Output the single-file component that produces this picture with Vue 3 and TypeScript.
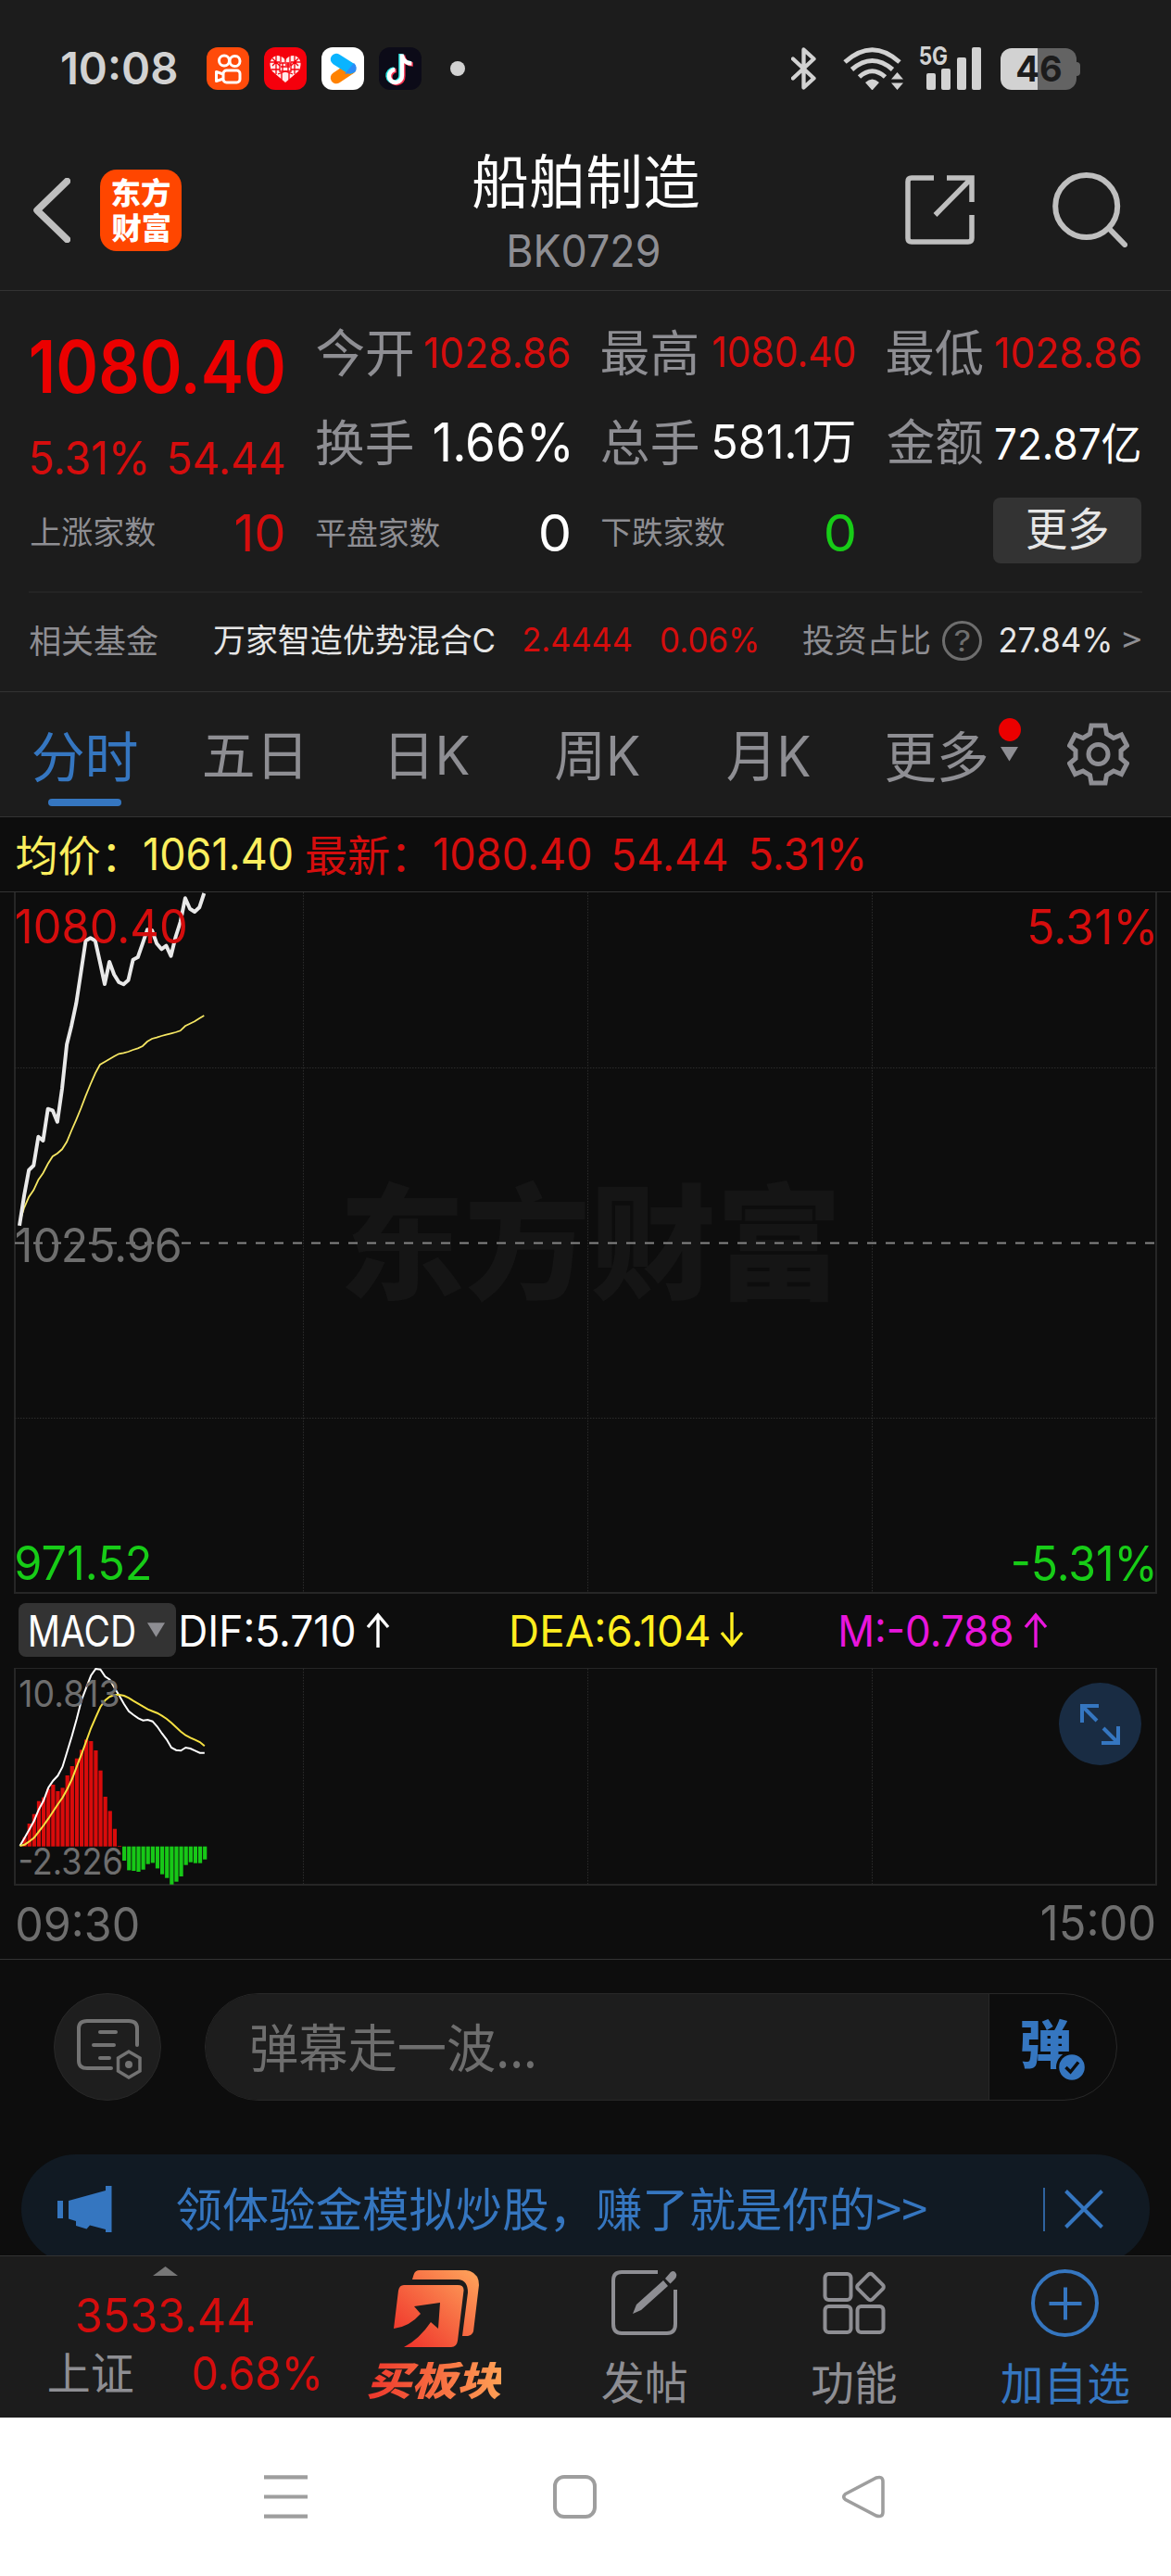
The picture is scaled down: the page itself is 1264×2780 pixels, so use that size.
<script setup lang="ts">
import { computed, defineComponent, h } from 'vue'

const FAMILY = 'Inter, "Noto Sans CJK SC", sans-serif'
const REF = 200
const ctx = document.createElement('canvas').getContext('2d')!

/* Text sized by the box its glyphs fill: w and h are the drawn width and height. */
const FitText = defineComponent({
  props: {
    t: { type: String, required: true },
    w: { type: Number, required: true },
    h: { type: Number, required: true },
    weight: { type: Number, default: 400 },
    italic: Boolean,
    family: { type: String, default: FAMILY },
    gradient: { type: String, default: '' },
  },
  setup(props) {
    const box = computed(() => {
      const fontStyle = props.italic ? 'italic' : 'normal'
      ctx.font = `${fontStyle} ${props.weight} ${REF}px ${props.family}`
      const m = ctx.measureText(props.t)
      const inkH = m.actualBoundingBoxAscent + m.actualBoundingBoxDescent
      const inkW = m.actualBoundingBoxLeft + m.actualBoundingBoxRight
      const k = props.h / inkH
      const size = REF * k
      const sx = props.w / (inkW * k)
      const base = size / 2 + ((m.fontBoundingBoxAscent - m.fontBoundingBoxDescent) * k) / 2
      const dx = m.actualBoundingBoxLeft * k * sx
      const dy = m.actualBoundingBoxAscent * k - base
      return {
        display: 'inline-block',
        whiteSpace: 'pre',
        fontFamily: props.family,
        fontSize: `${size}px`,
        fontWeight: String(props.weight),
        fontStyle,
        lineHeight: `${size}px`,
        transformOrigin: '0 0',
        transform: `translate(${dx}px, ${dy}px) scaleX(${sx})`,
        ...(props.gradient
          ? { backgroundImage: props.gradient, backgroundClip: 'text', color: 'transparent' }
          : {}),
      }
    })
    return () =>
      h('span', { style: { display: 'block', flex: 'none', width: `${props.w}px`, height: `${props.h}px`, lineHeight: '0' } }, [
        h('span', { style: box.value }, props.t),
      ])
  },
})

const STEP = 5.11
const START = 21
const price = [360.7, 328, 300.7, 295.7, 264.7, 269, 234.7, 236.3, 248.7, 213, 165.3, 144.7, 120.7, 87.3, 53.3, 50.3, 53.3, 76.3, 100, 76, 89.7, 98, 100.3, 95.7, 73.7, 71, 56.3, 41.3, 42, 56.3, 62.3, 58.7, 69.7, 49, 33, 7.3, 18.7, 22, 17.3, 2]
const average = [358, 341.3, 329.7, 322.3, 311.3, 304, 294, 286, 282.7, 278.3, 270.3, 258, 246.3, 234, 220.7, 208, 196.3, 187, 184, 181, 178, 175.3, 174.3, 173, 171, 169.3, 167, 162, 159, 157.7, 156, 154.7, 153.3, 152, 150.3, 145.3, 142.7, 140.3, 137, 134]
const dif = [192, 183.3, 174.3, 165, 152.7, 143.3, 129.3, 121.7, 116.3, 106.7, 90, 73.3, 55, 35, 21.7, 8.3, 1, 1.7, 9.3, 12.7, 21.7, 30, 39, 46.7, 50.7, 54.3, 56.7, 56, 57.7, 63.3, 70.7, 77.3, 86, 88.7, 89.3, 86, 87, 89.3, 91.7, 91.7]
const dea = [192, 190.7, 187.3, 183.3, 176.7, 170, 162.7, 155, 147.3, 140, 130.7, 120, 106.7, 93.3, 79.3, 65, 53.3, 42, 35, 31, 29, 29, 30, 32.3, 35.7, 38.7, 41.7, 44.7, 46.7, 48.7, 51.7, 55, 59.3, 64, 68.7, 72.7, 75.3, 77.7, 80, 84.3]
const bars = [0, 10, 24.7, 35, 49, 53, 62, 66.7, 59.7, 63.3, 76.7, 86.7, 95, 104.3, 115.3, 113.7, 103.7, 82, 53.7, 38.3, 19, 0.7, -15.3, -25.7, -26.3, -27.3, -25, -19, -17.7, -23.7, -30, -34, -41, -38, -32.3, -20, -17, -18, -18, -14]

const line = (ys: number[], start = START) => ys.map((y, i) => `${(start + i * STEP).toFixed(1)},${y}`).join(' ')
const gridX = [327.5, 634.5, 941.5]
</script>

<template>
  <div class="phone">
    <div class="status">
      <FitText t="10:08" :w="123" :h="35.5" :weight="600" />
      <div class="apps">
        <svg width="46" height="46" viewBox="0 0 46 46">
          <rect width="46" height="46" rx="12" fill="#ff4b0a" />
          <g fill="none" stroke="#fff" stroke-width="3">
            <circle cx="19" cy="14.5" r="5.5" /><circle cx="30.5" cy="15" r="5.5" />
            <rect x="18" y="25" width="18" height="13" rx="3.5" />
            <path d="M18 29 L10.5 26.5 V36.500 L18 34" stroke-linejoin="round" />
          </g>
        </svg>
        <svg width="46" height="46" viewBox="0 0 46 46">
          <rect width="46" height="46" rx="12" fill="#f5000c" />
          <path d="M23 38 L9 26 Q6 22 6.500 16 Q9 9 15 9 Q21 10 23 14 Q26 9 32 9 Q38 10 39.500 16 Q40 22 37 26 Z" fill="#ffe9e9" />
          <g fill="none" stroke="#f5000c" stroke-width="1.300">
            <path d="M13 9 V29 M18 9 V16 M28 9 V16 M33 9 V29 M6 16 H17 M29 16 H40 M8 24 H17 M29 24 H38 M15 29 L23 26 L31 29 M23 10 V16 M19 27 V35 M27 27 V35 M9 12 L17 20 M37 12 L29 20 M9 20 L13 16 M37 20 L33 16" />
            <path d="M17 17 H29 V26 H17 Z M20 17 V26 M26 17 V26 M23 19 H29 M18 21 H28" />
          </g>
        </svg>
        <svg width="46" height="46" viewBox="0 0 46 46">
          <rect width="46" height="46" rx="12" fill="#fff" />
          <path d="M16 33 L31 23" stroke="#ff8200" stroke-width="12.500" stroke-linecap="round" />
          <path d="M16 13 L31 22.500" stroke="#0ab4ff" stroke-width="12.500" stroke-linecap="round" />
          <path d="M25 29 L36 27 A7 7 0 0 0 35 17 Z" fill="#2b8cf7" />
        </svg>
        <svg width="46" height="46" viewBox="0 0 46 46">
          <rect width="46" height="46" rx="12" fill="#0c0b18" />
          <g fill="none" stroke-width="4.500">
            <path d="M24.500 7 V30 A7 7 0 1 1 17 23.500 M24.500 9 Q27 17 35 17" stroke="#25e8e4" transform="translate(-1 0)" />
            <path d="M24.500 7 V30 A7 7 0 1 1 17 23.500 M24.500 9 Q27 17 35 17" stroke="#fa3350" transform="translate(1.800 1.500)" />
            <path d="M24.500 7 V30 A7 7 0 1 1 17 23.500 M24.500 9 Q27 17 35 17" stroke="#fff" transform="translate(.4 .5)" />
          </g>
        </svg>
      </div>
      <i class="more-dot"></i>
      <div class="signals">
        <svg width="27" height="46" viewBox="0 0 27 46">
          <path d="M2 12.500 L24.500 33.500 L13.500 43.500 V2.500 L24.500 12.500 L2 33.500" fill="none" stroke="#d2d2d2" stroke-width="4.300" stroke-linejoin="round" stroke-linecap="round" />
        </svg>
        <svg class="wifi" width="65" height="46" viewBox="0 0 65 46">
          <g fill="none" stroke="#d2d2d2" stroke-width="5">
            <path d="M2 16 Q31.500 -10.500 61 16" /><path d="M9.500 24 Q31.500 5 53.500 24" /><path d="M17.500 32 Q31.500 19.500 45.500 32" />
          </g>
          <path d="M24 38 Q31.500 31 39 38 L31.500 46.500 Z M52 34.500 L58.500 27 L65 34.500 Z M52 38.500 H65 L58.500 46 Z" fill="#d2d2d2" />
        </svg>
        <div class="cell">
          <FitText class="gen" t="5G" :w="29" :h="20" :weight="700" />
          <i class="b1"></i><i class="b2"></i><i class="b3"></i><i class="b4"></i>
        </div>
        <div class="battery"><FitText t="46" :w="47" :h="29" :weight="700" /></div>
      </div>
    </div>

    <header class="head">
      <div class="head-left">
        <svg width="41" height="70" viewBox="0 0 41 70"><path d="M37.500 3.500 L5 35 L37.500 66.500" fill="none" stroke="#bfbfbf" stroke-width="7.500" stroke-linecap="round" stroke-linejoin="round" /></svg>
        <div class="logo">
          <FitText t="东方" :w="62" :h="31" :weight="900" />
          <FitText t="财富" :w="62" :h="31" :weight="900" />
        </div>
      </div>
      <div class="title">
        <FitText t="船舶制造" :w="243" :h="59" />
        <FitText class="code" t="BK0729" :w="161" :h="35.5" />
      </div>
      <div class="head-right">
        <svg width="75" height="75" viewBox="0 0 75 75"><path d="M31 3 H7 Q3 3 3 7 V68 Q3 72 7 72 H68 Q72 72 72 68 V43 M45 3 H72 V29 M72 3 L32.500 43" fill="none" stroke="#bfbfbf" stroke-width="5.500" /></svg>
        <svg width="81" height="81" viewBox="0 0 81 81"><circle cx="36.700" cy="36.500" r="33.500" fill="none" stroke="#bfbfbf" stroke-width="6" /><path d="M61 60.500 L78 78" stroke="#bfbfbf" stroke-width="6" stroke-linecap="round" /></svg>
      </div>
    </header>

    <section class="quote">
      <div class="col first">
        <div class="cell-row price"><FitText t="1080.40" :w="271.5" :h="58" :weight="600" /></div>
        <div class="cell-row change red"><FitText t="5.31%" :w="123" :h="37" /><FitText t="54.44" :w="123" :h="35" /></div>
        <div class="cell-row"><FitText t="上涨家数" :w="133.5" :h="32.5" /><FitText class="red" t="10" :w="50.5" :h="41" /></div>
      </div>
      <div class="col">
        <div class="cell-row"><FitText t="今开" :w="103" :h="51.5" /><FitText class="red" t="1028.86" :w="155" :h="34" /></div>
        <div class="cell-row"><FitText t="换手" :w="103" :h="50" /><FitText class="white" t="1.66%" :w="145" :h="43.5" /></div>
        <div class="cell-row"><FitText t="平盘家数" :w="132.5" :h="32.5" /><FitText class="white" t="0" :w="30" :h="41" /></div>
      </div>
      <div class="col">
        <div class="cell-row"><FitText t="最高" :w="102" :h="50" /><FitText class="red" t="1080.40" :w="152" :h="33.5" /></div>
        <div class="cell-row"><FitText t="总手" :w="103" :h="49" /><FitText class="white" t="581.1万" :w="150.5" :h="43" /></div>
        <div class="cell-row"><FitText t="下跌家数" :w="132" :h="32.5" /><FitText class="green" t="0" :w="30" :h="41" /></div>
      </div>
      <div class="col">
        <div class="cell-row"><FitText t="最低" :w="102.5" :h="50" /><FitText class="red" t="1028.86" :w="155.5" :h="34" /></div>
        <div class="cell-row"><FitText t="金额" :w="102.5" :h="50" /><FitText class="white" t="72.87亿" :w="155" :h="43.5" /></div>
        <div class="cell-row"><div class="more-btn"><FitText t="更多" :w="86" :h="45.5" /></div></div>
      </div>
    </section>

    <section class="fund">
      <FitText t="相关基金" :w="138" :h="33" />
      <FitText class="fund-name" t="万家智造优势混合C" :w="302.5" :h="33" />
      <FitText class="fund-nav red" t="2.4444" :w="115" :h="26.5" />
      <FitText class="fund-pct red" t="0.06%" :w="102.500" :h="27.5" />
      <FitText class="fund-share" t="投资占比" :w="136" :h="32.5" />
      <div class="help"><FitText t="?" :w="15.5" :h="23" /></div>
      <FitText class="fund-val" t="27.84%" :w="117.5" :h="27.5" />
      <FitText class="fund-go" t=">" :w="18" :h="17" />
    </section>

    <nav class="tabs">
      <div class="tab on"><FitText t="分时" :w="111.5" :h="55" /></div>
      <FitText class="t2" t="五日" :w="103" :h="48.5" />
      <FitText class="t3" t="日K" :w="83" :h="48.5" />
      <FitText class="t4" t="周K" :w="90" :h="52" />
      <FitText class="t5" t="月K" :w="89" :h="52.5" />
      <div class="tab t6"><FitText t="更多" :w="107.5" :h="55" /><i class="caret"></i><i class="badge"></i></div>
      <svg class="gear" width="67" height="68" viewBox="0 0 67 68">
        <path d="M26 3 H41 L42.500 12 L50 16.500 L58.500 13 L64.500 24.500 L58 30 V38.500 L64.500 44 L58.500 55.500 L50 52 L42.500 56.500 L41 65 H26 L24.500 56.500 L17 52 L8.500 55.500 L2.500 44 L9 38.500 V30 L2.500 24.500 L8.500 13 L17 16.500 L24.500 12 Z" fill="none" stroke="#8e8e93" stroke-width="5" />
        <circle cx="33.500" cy="34" r="10.500" fill="none" stroke="#8e8e93" stroke-width="5" />
      </svg>
    </nav>

    <div class="summary red">
      <FitText class="yellow" t="均价：" :w="106" :h="43" />
      <FitText class="s2 yellow" t="1061.40" :w="158.5" :h="35.5" />
      <FitText class="s3" t="最新：" :w="105.5" :h="43" />
      <FitText class="s4" t="1080.40" :w="168" :h="35.5" />
      <FitText class="s5" t="54.44" :w="121" :h="35" />
      <FitText class="s6" t="5.31%" :w="120" :h="36.5" />
    </div>

    <div class="chart">
      <FitText class="mark" t="东方财富" :w="528" :h="132" :weight="900" />
      <svg width="1264" height="758" viewBox="0 0 1264 758">
        <g fill="none" stroke="#262626">
          <path d="M0 .5 H1264" stroke="#333" /><path d="M16 1 V757 H1248 V1" stroke-width="2" />
          <path v-for="x in gridX" :key="x" :d="`M${x} 1 V757`" stroke-dasharray="1.500 1.500" stroke="#2c2c2c" />
          <path d="M16 190.500 H1248 M16 568.500 H1248" stroke-dasharray="1.500 1.500" stroke="#2c2c2c" />
        </g>
        <path d="M16 379.500 H1248" stroke="#868686" stroke-width="2" stroke-dasharray="10 10" />
        <polyline :points="line(average)" fill="none" stroke="#f5e663" stroke-width="1.800" />
        <polyline :points="line(price)" fill="none" stroke="#e9e9e9" stroke-width="4" stroke-linejoin="round" />
      </svg>
      <FitText class="c-high red" t="1080.40" :w="182" :h="38" />
      <FitText class="c-mid" t="1025.96" :w="176" :h="38" />
      <FitText class="c-low green" t="971.52" :w="143" :h="38" />
      <FitText class="c-up red" t="5.31%" :w="133" :h="39" />
      <FitText class="c-down green" t="-5.31%" :w="150.5" :h="39" />
    </div>

    <div class="macd-head">
      <div class="macd-btn"><FitText t="MACD" :w="112" :h="35" /><i class="caret"></i></div>
      <FitText class="m1" t="DIF:5.710" :w="186" :h="35" />
      <svg class="arrow" width="26" height="38" viewBox="0 0 26 38"><path d="M13 38 V3 M2 16 L13 3 L24 16" fill="none" stroke="#fff" stroke-width="3.400" /></svg>
      <FitText class="m2 bright" t="DEA:6.104" :w="212" :h="35" />
      <svg class="arrow" width="26" height="38" viewBox="0 0 26 38"><path d="M13 0 V35 M2 22 L13 35 L24 22" fill="none" stroke="#ffee1f" stroke-width="3.400" /></svg>
      <FitText class="m3 magenta" t="M:-0.788" :w="184" :h="35" />
      <svg class="arrow" width="26" height="38" viewBox="0 0 26 38"><path d="M13 38 V3 M2 16 L13 3 L24 16" fill="none" stroke="#e815dc" stroke-width="3.400" /></svg>
    </div>

    <div class="macd">
      <svg width="1264" height="236" viewBox="0 0 1264 236">
        <g fill="none" stroke="#262626">
          <path d="M16 .5 H1248" /><path d="M16 0 V234 H1248 V0" stroke-width="2" />
          <path v-for="x in gridX" :key="x" :d="`M${x} 1 V233`" stroke-dasharray="1.500 1.500" stroke="#2c2c2c" />
        </g>
        <rect
          v-for="(v, i) in bars" :key="i"
          :x="21.6 + i * 5.12 - 2.2" :y="v > 0 ? 192.7 - v : 192.7" width="4.200" :height="Math.abs(v)"
          :fill="v > 0 ? '#d90b0b' : '#17c817'"
        />
        <polyline :points="line(dif, 21.5)" fill="none" stroke="#fff" stroke-width="2" />
        <polyline :points="line(dea, 21.5)" fill="none" stroke="#f5e042" stroke-width="2" />
      </svg>
      <FitText class="a-high" t="10.813" :w="105.5" :h="29" />
      <FitText class="a-low" t="-2.326" :w="109" :h="29" />
      <svg class="expand" width="89" height="89" viewBox="0 0 89 89">
        <circle cx="44.500" cy="44.500" r="44.500" fill="#192c43" />
        <path d="M25 43 V25 H43 M25 25 L41 41 M64 47 V65 H46 M64 65 L48 49" fill="none" stroke="#3576c0" stroke-width="4" />
      </svg>
    </div>

    <div class="times"><FitText t="09:30" :w="129.5" :h="38.5" /><FitText t="15:00" :w="120.5" :h="38.5" /></div>

    <div class="danmu">
      <div class="danmu-set">
        <svg width="70" height="65" viewBox="0 0 70 65">
          <g fill="none" stroke="#737373" stroke-width="4" stroke-linecap="round">
            <path d="M37 53 H11 Q2 53 2 45 V10 Q2 2 11 2 H56 Q65 2 65 10 V28" /><path d="M25 14 H42 M18 28 H40 M25 42 H35" />
            <path d="M56 35 L68 42 V56 L56 63 L44.500 56 V42 Z" stroke-width="3.500" />
          </g>
          <circle cx="56" cy="49" r="4" fill="#737373" />
        </svg>
      </div>
      <div class="danmu-box">
        <div class="danmu-input"><FitText t="弹幕走一波..." :w="304" :h="51.5" family="'Noto Sans CJK SC', sans-serif" /></div>
        <div class="danmu-toggle">
          <FitText t="弹" :w="52.5" :h="53" :weight="900" />
          <svg class="check" width="34" height="34" viewBox="0 0 34 34"><circle cx="17" cy="17" r="17" fill="#0d0d0d" /><circle cx="17" cy="17" r="13.800" fill="#3576c0" /><path d="M10.500 17 L15.500 22 L24 11.500" fill="none" stroke="#0d0d0d" stroke-width="3.500" /></svg>
        </div>
      </div>
    </div>

    <div class="promo-wrap">
      <div class="promo">
        <svg width="59" height="50" viewBox="0 0 59 50"><path d="M0 16 H6 V35 H0 Z M12 16 L52 5 V0 H58.500 V50 H52 V47 L35 42.500 L31.500 46.500 L20 43 V38 L12 35.500 Z" fill="#3576c0" /></svg>
        <FitText class="promo-text" t="领体验金模拟炒股，赚了就是你的>>" :w="808.5" :h="48.5" family="'Noto Sans CJK SC', sans-serif" />
        <i class="promo-sep"></i>
        <svg class="promo-x" width="42" height="42" viewBox="0 0 42 42"><path d="M1.500 1.500 L40.500 40.500 M40.500 1.500 L1.500 40.500" stroke="#3576c0" stroke-width="4" /></svg>
      </div>
    </div>

    <footer class="bar">
      <div class="index red">
        <i class="up"></i>
        <FitText t="3533.44" :w="189" :h="38" />
        <div class="index-row"><FitText class="grey" t="上证" :w="90" :h="42.5" /><FitText t="0.68%" :w="134.5" :h="37.5" /></div>
      </div>
      <div class="item buy">
        <svg width="92" height="83" viewBox="0 0 92 83">
          <defs><linearGradient id="hot" x1="0" y1="1" x2="1" y2="0"><stop offset="0" stop-color="#ee2b27" /><stop offset="1" stop-color="#ffa65c" /></linearGradient></defs>
          <path d="M11 16 H69 Q76 16 75.500 22 L69 76 Q68 83 62 83 H11 Q28 74 40 56 L48 63 L50 35 L22 39 L29 47 Q17 61 0 63 L5 22 Q6 16 11 16 Z M20 10 L21.500 5 Q23 0 28 0 H78 Q92 2 92 16 L86 66 Q85 70 80 71 H74 L80 24 Q80 11 70 10 Z" fill="url(#hot)" />
        </svg>
        <FitText t="买板块" :w="148" :h="41" :weight="900" italic gradient="linear-gradient(90deg, #ee352b, #ffa055)" />
      </div>
      <div class="item post">
        <svg width="71" height="71" viewBox="0 0 71 71">
          <path d="M50 2 H11 Q2 2 2 11 V58 Q2 68 11 68 H60 Q69 68 69 58 V21" fill="none" stroke="#8e8e93" stroke-width="4" />
          <path d="M23 47 L27 37 L56 11 L61 17 L32 43 Z M58 9 L64 2 Q68 -1 70 4 Q71 7 68 10 L63.500 14.500 Z" fill="#8e8e93" />
        </svg>
        <FitText t="发帖" :w="91" :h="45" />
      </div>
      <div class="item tools">
        <svg width="69" height="69" viewBox="0 0 69 69">
          <g fill="none" stroke="#8e8e93" stroke-width="4">
            <rect x="2.500" y="4" width="28" height="28" rx="4" /><rect x="2.500" y="39" width="28" height="28" rx="4" /><rect x="37.500" y="39" width="28" height="28" rx="4" />
            <rect x="40.500" y="7" width="22" height="22" rx="3" transform="rotate(45 51.500 18)" />
          </g>
        </svg>
        <FitText t="功能" :w="90" :h="45" />
      </div>
      <div class="item add">
        <svg width="73" height="73" viewBox="0 0 73 73"><circle cx="36.500" cy="36.500" r="34.500" fill="none" stroke="#3576c0" stroke-width="4" /><path d="M19.500 37 H54.500 M37 19.500 V54.500" stroke="#3576c0" stroke-width="4" /></svg>
        <FitText t="加自选" :w="137.5" :h="44" />
      </div>
    </footer>

    <div class="sysnav">
      <svg width="47" height="47" viewBox="0 0 47 47"><path d="M0 2.300 H47 M0 23.500 H47 M0 44.700 H47" stroke="#9e9e9e" stroke-width="4.200" /></svg>
      <svg width="47" height="47" viewBox="0 0 47 47"><rect x="2" y="2" width="43" height="43" rx="10" fill="none" stroke="#9e9e9e" stroke-width="4" /></svg>
      <svg width="46" height="47" viewBox="0 0 46 47"><path d="M3.500 20.500 L37 3 Q44 1 44 7 V40 Q44 46 37 44 L3.500 26.500 Q0 23.500 3.500 20.500 Z" fill="none" stroke="#9e9e9e" stroke-width="3.600" /></svg>
    </div>
  </div>
</template>

<style>
body { background: #0d0d0d; }
</style>

<style scoped>
.phone { width: 1264px; height: 2780px; overflow: hidden; display: flex; flex-direction: column; background: #0d0d0d; color: #8e8e93; font-family: Inter, "Noto Sans CJK SC", sans-serif; }
.phone > * { flex: none; box-sizing: border-box; }
svg { display: block; flex: none; }
i { display: block; flex: none; }
.red { color: #d50d0d; }
.white { color: #fff; }
.green { color: #17cc17; }
.yellow { color: #fbee5e; }
.bright { color: #ffee1f; }
.magenta { color: #e815dc; }
.grey { color: #8e8e93; }

.status { height: 148px; background: #1c1c1c; color: #d2d2d2; display: flex; align-items: center; padding: 0 98px 0 66.5px; }
.apps { display: flex; gap: 16px; margin-left: 33.5px; }
.more-dot { width: 16px; height: 16px; border-radius: 50%; background: #d2d2d2; margin-left: 31px; }
.signals { margin-left: auto; display: flex; align-items: center; }
.wifi { margin-left: 29px; }
.cell { position: relative; width: 66px; height: 46px; margin-left: 18px; display: flex; align-items: flex-end; gap: 6.4px; padding-left: 7px; box-sizing: border-box; }
.cell i { width: 10px; border-radius: 2px; background: #d2d2d2; }
.gen { position: absolute; left: 0; top: -1px; }
.b1 { height: 18px; } .b2 { height: 23px; } .b3 { height: 35px; } .b4 { height: 46px; }
.battery { position: relative; width: 82px; height: 45px; margin: 1px 4px 0 21px; border-radius: 12px; background: linear-gradient(90deg, #d2d2d2 40px, #636363 40px); color: #1c1c1c; display: flex; align-items: center; justify-content: center; }
.battery::after { content: ""; position: absolute; right: -4px; top: 15px; width: 4px; height: 15px; border-radius: 0 4px 4px 0; background: #636363; }

.head { height: 166px; background: #1c1c1c; border-bottom: 1px solid #333; display: grid; grid-template-columns: 1fr auto 1fr; padding: 0 47px 0 35px; }
.head-left { display: flex; align-items: center; gap: 31.5px; height: 158px; }
.logo { width: 88px; height: 88px; border-radius: 18px; background: #ff4600; color: #fff; display: flex; flex-direction: column; align-items: center; justify-content: center; gap: 7px; }
.title { display: flex; flex-direction: column; align-items: center; gap: 28px; padding-top: 18px; color: #fff; margin-left: 12px; }
.code { color: #8e8e93; margin-right: 3px; }
.head-right { display: flex; align-items: center; justify-content: flex-end; gap: 84px; height: 157px; }

.quote { height: 324px; background: #1c1c1c; display: grid; grid-template-columns: repeat(4, 272px); column-gap: 36.2px; padding: 18.5px 33.5px 0; }
.cell-row { height: 97px; display: flex; align-items: center; justify-content: space-between; }
.cell-row.price { height: 129px; color: #eb0000; }
.cell-row.change { height: 65px; }
.more-btn { width: 160px; height: 71px; border-radius: 8px; background: #333; color: #e6e6e6; display: flex; align-items: center; justify-content: center; margin: -6px -2px 0 auto; }

.fund { height: 109px; background: linear-gradient(#242424, #242424) 31px 0 / 1202px 2px no-repeat #1c1c1c; border-bottom: 1px solid #333; display: flex; align-items: center; padding: 0 0 1px 32px; }
.fund-name { margin-left: 60.5px; color: #e6e6e6; }
.fund-nav { margin-left: 33px; }
.fund-pct { margin-left: 33px; }
.fund-share { margin-left: 50px; }
.help { width: 43px; height: 43px; box-sizing: border-box; border: 3px solid #6e6e6e; border-radius: 50%; color: #6e6e6e; margin-left: 14.5px; display: flex; align-items: center; justify-content: center; }
.fund-val { margin-left: 20px; color: #e6e6e6; }
.fund-go { margin-left: 15.5px; }

.tabs { height: 135px; background: #1c1c1c; border-bottom: 1px solid #333; display: flex; align-items: center; padding: 5px 0 0 36px; }
.tab { position: relative; }
.on { color: #3576c0; }
.on::after { content: ""; position: absolute; left: 16px; top: 73px; width: 79px; height: 8px; border-radius: 4px; background: #3576c0; }
.t2 { margin-left: 73.5px; } .t3 { margin-left: 99px; } .t4 { margin-left: 94px; } .t5 { margin-left: 95px; } .t6 { margin-left: 83px; }
.caret { width: 19px; height: 15.5px; background: #8e8e93; clip-path: polygon(0 0, 100% 0, 50% 100%); }
.t6 .caret { position: absolute; left: 123px; top: 17px; }
.badge { position: absolute; left: 121px; top: -14px; width: 24px; height: 25px; border-radius: 50%; background: #eb0000; }
.gear { margin: -5px 0 0 87px; }

.summary { height: 80px; display: flex; align-items: center; padding-left: 18px; }
.s2 { margin-left: 32px; } .s3 { margin-left: 16.5px; } .s4 { margin-left: 32.5px; } .s5 { margin-left: 26px; } .s6 { margin-left: 26.5px; }

.chart { position: relative; height: 758px; }
.chart > svg { position: relative; }
.mark { position: absolute; left: 372px; top: 313px; color: #151515; }
.c-high { position: absolute; left: 18px; top: 19px; }
.c-mid { position: absolute; left: 18px; top: 363px; color: #6e6e6e; }
.c-low { position: absolute; left: 18px; top: 706px; }
.c-up { position: absolute; right: 19.5px; top: 19px; }
.c-down { position: absolute; right: 19.5px; top: 706px; }

.macd-head { height: 80px; display: flex; align-items: center; padding: 0 0 2px 20px; color: #fff; }
.macd-btn { width: 170px; height: 58px; border-radius: 8px; background: #333; display: flex; align-items: center; gap: 14px; padding-left: 13px; box-sizing: border-box; }
.m1 { margin-left: 6px; } .m2 { margin-left: 132px; } .m3 { margin-left: 105px; }
.arrow { margin-left: 12.5px; }

.macd { position: relative; height: 236px; color: #6e6e6e; }
.a-high { position: absolute; left: 21.5px; top: 14px; }
.a-low { position: absolute; left: 22px; top: 195px; }
.expand { position: absolute; left: 1143px; top: 16px; }

.times { height: 79px; border-bottom: 1px solid #333; display: flex; justify-content: space-between; align-items: center; padding: 2px 18.5px 0; color: #6e6e6e; }

.danmu { height: 210px; display: flex; align-items: flex-start; gap: 47px; padding: 36px 58px 0; }
.danmu-set { width: 116px; height: 116px; box-sizing: border-box; border-radius: 50%; background: #1e1e1e; border: 1.500px solid #282828; display: flex; align-items: center; justify-content: center; padding: 5px 0 0 4px; }
.danmu-box { width: 985px; height: 116px; box-sizing: border-box; border: 1.500px solid #282828; border-radius: 58px; overflow: hidden; display: flex; }
.danmu-input { flex: none; box-sizing: border-box; width: 846px; background: #1d1d1d; border-right: 1px solid #282828; display: flex; align-items: center; padding: 4px 0 0 50px; color: #6e6e6e; }
.danmu-toggle { position: relative; flex: 1; padding: 28px 0 0 35px; color: #3576c0; }
.check { position: absolute; left: 72px; top: 62px; }

.promo-wrap { height: 109px; overflow: hidden; padding: 0 23px; }
.promo { height: 118px; border-radius: 59px; background: #111a23; color: #3576c0; display: flex; align-items: center; padding-left: 39px; }
.promo-text { margin-left: 69.5px; }
.promo-sep { width: 2px; height: 47px; margin-left: 127px; background: #2f639f; }
.promo-x { margin-left: 21px; }

.bar { height: 175px; background: #1c1c1c; border-top: 1px solid #333; display: flex; }
.index { width: 290px; margin-left: 53px; display: flex; flex-direction: column; padding-top: 11px; }
.up { width: 27px; height: 10px; margin-left: 112px; background: #777; clip-path: polygon(50% 0, 100% 100%, 0 100%); }
.index > span { margin: 24px 0 0 31px; }
.index-row { display: flex; justify-content: space-between; align-items: center; margin-top: 22px; }
.item { display: flex; flex-direction: column; align-items: center; padding-top: 15px; }
.buy { margin-left: 54px; gap: 16px; }
.post { margin-left: 105px; gap: 29px; }
.tools { margin-left: 136px; gap: 31px; }
.add { margin-left: 114px; gap: 28px; color: #3576c0; padding-top: 14px; }

.sysnav { height: 171px; background: #fff; display: flex; align-items: center; padding: 0 309px 0 285px; justify-content: space-between; }
</style>
